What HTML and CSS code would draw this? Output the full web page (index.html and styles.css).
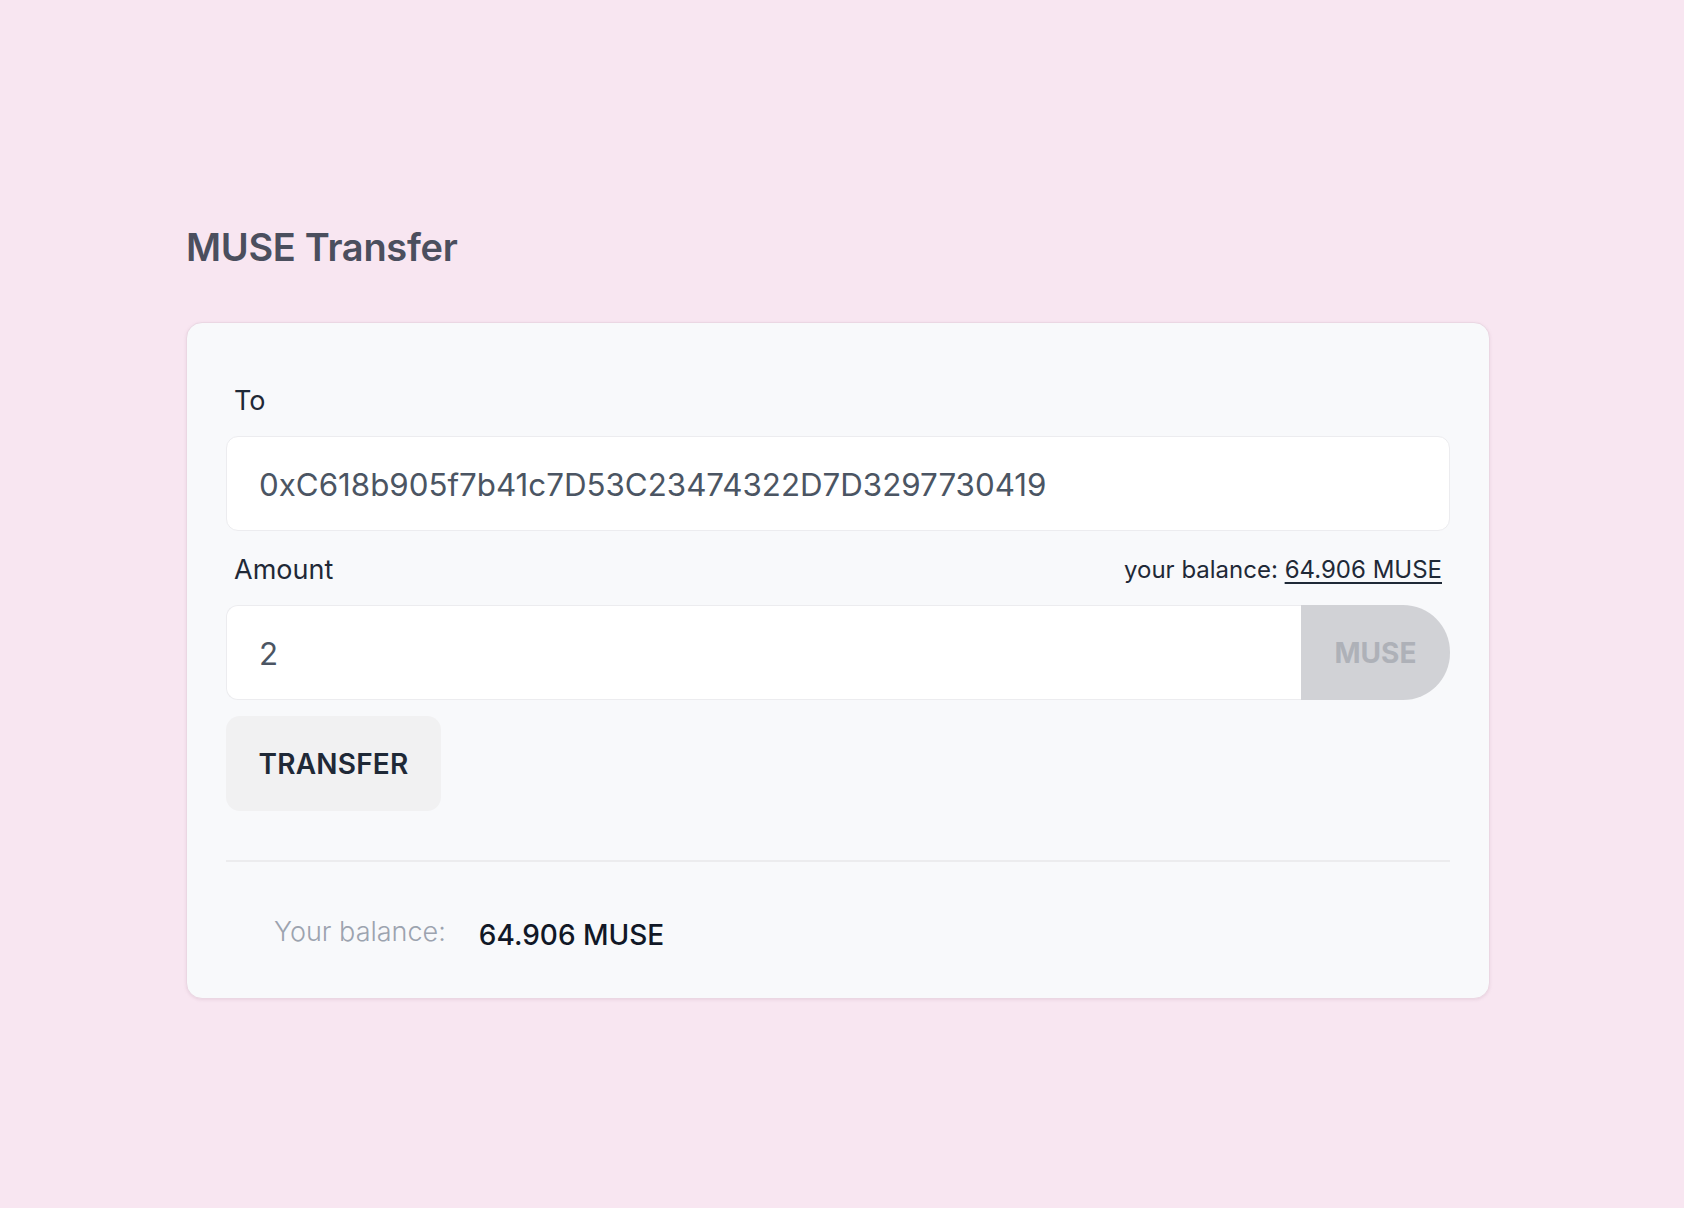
FILE: index.html
```html
<!DOCTYPE html>
<html lang="en">
<head>
<meta charset="utf-8">
<title>MUSE Transfer</title>
<link rel="stylesheet" href="styles.css">
</head>
<body>
<main class="page">
  <h1 class="title">MUSE Transfer</h1>
  <section class="card">
    <div class="label-row">
      <label class="label" for="to">To</label>
    </div>
    <div class="field">
      <input id="to" class="input" type="text" value="0xC618b905f7b41c7D53C23474322D7D3297730419">
    </div>
    <div class="label-row">
      <label class="label" for="amount">Amount</label>
      <span class="hint">your balance: <a class="hint-link" href="#">64.906 MUSE</a></span>
    </div>
    <div class="field group">
      <input id="amount" class="input input-joined" type="text" value="2">
      <span class="addon">MUSE</span>
    </div>
    <div class="actions">
      <button class="btn" type="button">TRANSFER</button>
    </div>
    <hr class="divider">
    <div class="balance">
      <span class="balance-label">Your balance:</span>
      <span class="balance-value">64.906 MUSE</span>
    </div>
  </section>
</main>
</body>
</html>
```

FILE: styles.css
```css
* { box-sizing: border-box; }

html, body {
  margin: 0;
  padding: 0;
}

body {
  background: #f8e6f1;
  font-family: Inter, "Noto Sans", "Liberation Sans", sans-serif;
  color: #1f2937;
  min-height: 1208px;
}

.page {
  width: 1304px;
  margin-left: 186px;
  padding-top: 223px;
}

.title {
  margin: 0 0 51px 0;
  font-size: 38px;
  line-height: 48px;
  font-weight: 600;
  color: #4b4f5e;
  letter-spacing: -0.3px;
}

.card {
  background: #f8f9fb;
  border: 1px solid #ebd7e3;
  border-radius: 16px;
  box-shadow: 0 1px 3px rgba(190, 150, 175, 0.25);
  padding: 39px 39px 39px 39px;
}

.label-row {
  display: flex;
  justify-content: space-between;
  align-items: center;
  padding: 19px 8px 15px;
}

.label {
  font-size: 27px;
  line-height: 40px;
  color: #1f2937;
}

.hint {
  font-size: 24px;
  line-height: 40px;
  color: #1f2937;
}

.hint-link {
  color: #1f2937;
  text-decoration: underline;
  text-underline-offset: 4px;
  text-decoration-thickness: 2px;
}

.field {
  display: flex;
}

.input {
  width: 100%;
  height: 95px;
  border: 1px solid #ececef;
  border-radius: 12px;
  background: #ffffff;
  padding: 2px 32px 0;
  font-family: Inter, "Noto Sans", "Liberation Sans", sans-serif;
  font-size: 31.3px;
  color: #4b5563;
  outline: none;
}

.input-joined {
  flex: 1;
  border-right: none;
  border-radius: 12px 0 0 12px;
}

.addon {
  flex: 0 0 149px;
  height: 95px;
  background: #d1d2d6;
  border-radius: 0 47px 47px 0;
  display: flex;
  align-items: center;
  justify-content: center;
  font-size: 28px;
  font-weight: 700;
  color: #aeb1b8;
}

.actions {
  padding-top: 16px;
}

.btn {
  height: 95px;
  width: 215px;
  border: none;
  border-radius: 14px;
  background: #f1f1f2;
  font-family: Inter, "Noto Sans", "Liberation Sans", sans-serif;
  font-size: 28px;
  font-weight: 600;
  color: #1f2937;
  letter-spacing: 0.2px;
  cursor: pointer;
}

.divider {
  margin: 49px 0 0 0;
  border: none;
  border-top: 2px solid #ececee;
  height: 0;
}

.balance {
  display: flex;
  align-items: center;
  gap: 33px;
  padding: 50px 48px 7px;
  line-height: 40px;
}

.balance-label {
  font-size: 27px;
  font-weight: 300;
  color: #9ca3af;
}

.balance-value {
  font-size: 28px;
  font-weight: 500;
  color: #111827;
  position: relative;
  top: 3px;
}
```
